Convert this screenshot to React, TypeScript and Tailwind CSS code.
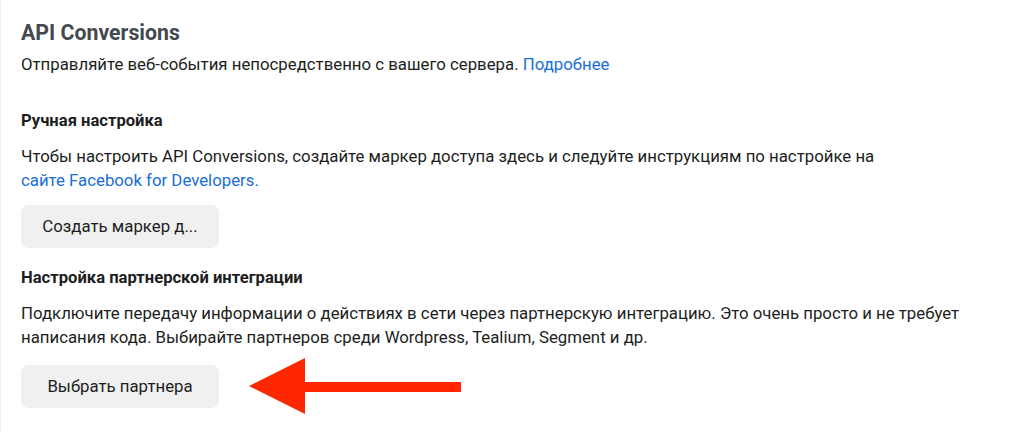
export default function App() {
  return (
    <div className="h-[432px] w-[1024px] overflow-hidden bg-white border-l border-[#ececec] font-['Roboto',sans-serif] text-[#1c1e21]">
      <div className="px-5 pt-[19px]">
        <h1 className="text-[21.3px] leading-[28px] font-bold text-[#444950]">API Conversions</h1>
        <p className="mt-[5px] text-[16.8px] leading-[24px]">
          Отправляйте веб-события непосредственно с вашего сервера.{" "}
          <a className="text-[#1a6ed8]">Подробнее</a>
        </p>

        <section className="mt-[35px]">
          <h2 className="text-[16.6px] leading-[20px] font-bold">Ручная настройка</h2>
          <p className="mt-[13px] text-[16.8px] leading-[24px]">
            Чтобы настроить API Conversions, создайте маркер доступа здесь и следуйте инструкциям по настройке на
            <br />
            <a className="text-[#1a6ed8]">сайте Facebook for Developers.</a>
          </p>
          <button className="mt-[13px] flex h-[43px] w-[198px] items-center justify-center rounded-lg bg-[#f0f0f0] text-[16.8px] text-[#1c1e21]">
            Создать маркер д...
          </button>
        </section>

        <section className="mt-[20px]">
          <h2 className="text-[16.6px] leading-[20px] font-bold">Настройка партнерской интеграции</h2>
          <p className="mt-[13px] text-[16.8px] leading-[24px]">
            Подключите передачу информации о действиях в сети через партнерскую интеграцию. Это очень просто и не требует
            <br />
            написания кода. Выбирайте партнеров среди Wordpress, Tealium, Segment и др.
          </p>
          <div className="mt-[9px] flex items-center">
            <button className="flex h-[43px] w-[198px] items-center justify-center rounded-lg bg-[#f0f0f0] text-[16.8px] text-[#1c1e21]">
              Выбрать партнера
            </button>
            <svg width="213" height="57" viewBox="0 0 213 57" className="ml-[30px]">
              <polygon points="0,28 56,0 56,24 212,24 212,34 56,34 56,56" fill="#ff2600" />
            </svg>
          </div>
        </section>
      </div>
    </div>
  );
}
